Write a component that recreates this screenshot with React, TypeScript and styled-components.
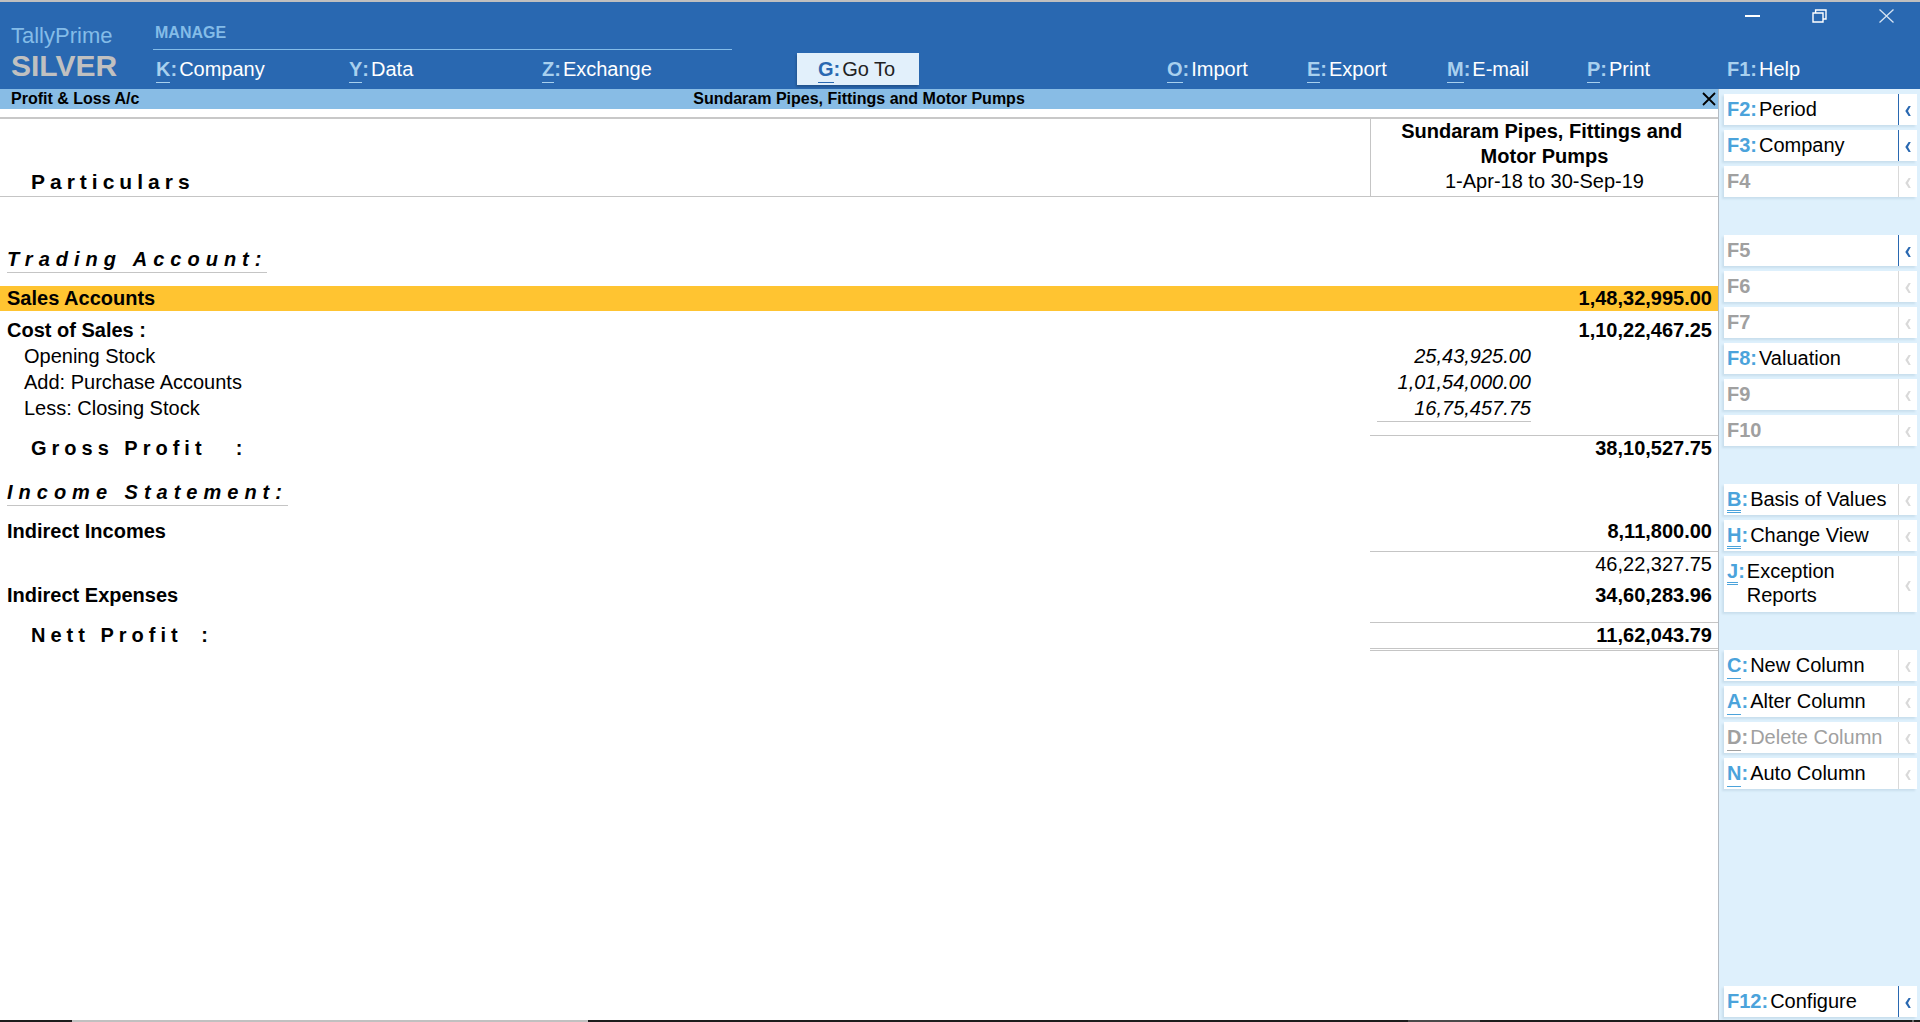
import React from "react";
import styled, { createGlobalStyle, css } from "styled-components";

const color = {
  blue: "#2968b1",
  bar: "#88bce5",
  sky: "#84bce8",
  headKey: "#a8d0ee",
  panel: "#def0fc",
  key: "#4ba3db",
  rule: "#c5c5c5",
  off: "#a0a0a0",
  highlight: "#ffc431",
};

const GlobalStyle = createGlobalStyle`
  *, *::before, *::after { box-sizing: border-box; }
  body {
    margin: 0;
    background: #fff;
    color: #000;
    font: 20px/25px "Liberation Sans", Arial, sans-serif;
  }
  button {
    margin: 0;
    padding: 0;
    border: 0;
    background: none;
    color: inherit;
    font: inherit;
    text-align: left;
    cursor: pointer;
  }
  button:disabled { cursor: default; }
`;

const Page = styled.div`
  display: flex;
  flex-direction: column;
  min-height: 100vh;
`;

/* ---------- top bar ---------- */

const TopBar = styled.header`
  display: flex;
  border-top: 2px solid #bfbfbf;
  background: ${color.blue};
  color: #fff;
`;

const Brand = styled.div`
  width: 153px;
  padding: 21px 0 0 11px;
`;

const Product = styled.div`
  color: ${color.sky};
  font-size: 22px;
  line-height: 26px;
`;

const Edition = styled.div`
  color: #c0c0c0;
  font-size: 30px;
  font-weight: bold;
  line-height: 34px;
`;

const Manage = styled.div`
  width: 579px;
  margin-right: 1px;
  padding-top: 21px;
`;

const ManageTitle = styled.div`
  padding: 0 2px;
  height: 27px;
  border-bottom: 1px solid ${color.sky};
  color: ${color.sky};
  font-size: 16px;
  font-weight: bold;
  line-height: 20px;
`;

const MenuRow = styled.nav<{ $track: number }>`
  display: grid;
  grid-auto-flow: column;
  grid-auto-columns: ${(p) => p.$track}px;
  padding-top: 7px;
`;

const MenuButton = styled.button`
  display: flex;
  padding-left: 3px;
  line-height: 24px;
  white-space: nowrap;
`;

const GoToButton = styled(MenuButton)`
  align-self: flex-start;
  min-width: 122px;
  margin: 51px 0 0 64px;
  padding: 4px 21px 0;
  height: 32px;
  background: #e2f0fb;
  box-shadow: -1px 2px 2px rgba(0, 0, 0, 0.2);
  color: #222;
`;

const KeyText = styled.span<{ $color: string }>`
  display: flex;
  margin-right: 2px;
  color: ${(p) => p.$color};
  font-weight: bold;
`;

const KeyLetter = styled.span<{ $lines: number }>`
  height: 26px;
  ${(p) => p.$lines === 1 && css`border-bottom: 1px solid currentColor;`}
  ${(p) => p.$lines === 2 && css`border-bottom: 3px double currentColor;`}
`;

const RightArea = styled.div`
  display: flex;
  flex-direction: column;
  justify-content: space-between;
  width: 756px;
  height: 87px;
  margin-left: auto;
`;

const WindowControls = styled.div`
  display: flex;
  justify-content: flex-end;
`;

const WindowButton = styled.button`
  display: flex;
  align-items: center;
  justify-content: center;
  width: 67px;
  height: 27px;
`;

const RightMenu = styled.div`
  height: 32px;
  nav { padding-top: 0; }
`;

/* ---------- work area ---------- */

const Work = styled.div`
  display: flex;
  flex: 1;
`;

const Report = styled.main`
  flex: 1;
  min-width: 0;
  border-right: 1px solid #b4bcc4;
`;

const TitleBar = styled.div`
  display: grid;
  grid-template-columns: 1fr auto 1fr;
  height: 20px;
  background: ${color.bar};
  font-size: 16px;
  font-weight: bold;
  line-height: 19px;
`;

const ScreenName = styled.span`
  padding-left: 11px;
`;

const CloseReport = styled.button`
  display: flex;
  align-items: center;
  justify-content: center;
  justify-self: end;
  width: 18px;
  height: 20px;
`;

const Statement = styled.table`
  width: 100%;
  margin-top: 8px;
  border-top: 2px solid #c8c8c8;
  border-collapse: separate;
  border-spacing: 0;
  table-layout: fixed;
`;

const SubCol = styled.col`
  width: 161px;
`;

const AmountCol = styled.col`
  width: 187px;
`;

const HeadCell = styled.th`
  padding: 0 0 2px 31px;
  border-bottom: 1px solid ${color.rule};
  font-size: 21px;
  letter-spacing: 5px;
  text-align: left;
  vertical-align: bottom;
`;

const PeriodCell = styled.th`
  padding: 0 8px 2px;
  border-bottom: 1px solid ${color.rule};
  border-left: 1px solid ${color.rule};
  text-align: center;
`;

const Period = styled.div`
  font-weight: normal;
`;

type Kind = "section" | "head" | "item" | "total" | "carry";

const INDENT: Record<Kind, number> = { section: 7, head: 7, item: 24, total: 31, carry: 7 };

const Row = styled.tr<{ $kind: Kind; $before: number; $after: number; $selected: boolean }>`
  background: ${(p) => (p.$selected ? color.highlight : "transparent")};
  font-weight: ${(p) => (p.$kind === "item" || p.$kind === "carry" ? "normal" : "bold")};
  line-height: ${(p) => (p.$kind === "item" ? 26 : 25)}px;

  th, td {
    padding: ${(p) => p.$before}px 0 ${(p) => p.$after}px;
    font-weight: inherit;
    text-align: right;
    vertical-align: top;
    white-space: nowrap;
  }
  th {
    padding-left: ${(p) => INDENT[p.$kind]}px;
    text-align: left;
  }
  td:last-child { padding-right: 6px; }

  ${(p) =>
    (p.$kind === "total" || p.$kind === "carry") &&
    css`
      line-height: 24px;
      th { border-top: 1px solid transparent; }
      td { border-top: 1px solid ${color.rule}; }
    `}
  ${(p) => p.$kind === "total" && css`th { letter-spacing: 5px; white-space: pre; }`}
`;

const GrandRow = styled(Row)`
  td {
    padding-bottom: 1px;
    border-bottom: 3px double ${color.rule};
  }
`;

const SectionTitle = styled.span`
  display: inline-block;
  height: 26px;
  border-bottom: 1px solid ${color.rule};
  font-style: italic;
  letter-spacing: 6px;
  vertical-align: top;
`;

const Colon = styled.span`
  margin-left: 8px;
`;

const SubAmount = styled.div<{ $last: boolean }>`
  margin-left: 7px;
  border-bottom: ${(p) => (p.$last ? `1px solid ${color.rule}` : "0")};
  font-style: italic;
`;

/* ---------- button panel ---------- */

const Panel = styled.aside`
  display: flex;
  flex-direction: column;
  gap: 38px;
  width: 201px;
  padding: 5px 3px 3px 5px;
  background: ${color.panel};
`;

const Group = styled.div`
  display: flex;
  flex-direction: column;
  gap: 5px;
  &:last-child { margin-top: auto; }
`;

const PanelItem = styled.div<{ $tall: boolean }>`
  display: flex;
  min-height: ${(p) => (p.$tall ? 56 : 31)}px;
  background: #fff;
  box-shadow: -2px 2px 2px #c9dfed;
`;

const PanelButton = styled.button`
  display: flex;
  flex: 1;
  align-items: flex-start;
  padding: 3px 0 2px 3px;
  line-height: 24px;
  &:disabled { color: ${color.off}; }
`;

const MoreButton = styled.button<{ $active: boolean }>`
  display: flex;
  align-items: center;
  justify-content: center;
  width: 19px;
  padding-top: 3px;
  border-left: 1px solid ${(p) => (p.$active ? color.blue : "#d9d9d9")};
  color: ${(p) => (p.$active ? color.blue : "#d9d9d9")};
`;

/* ---------- bottom edge ---------- */

const Edge = styled.footer`
  display: flex;
  height: 2px;
  background: #1c1c1c;
`;

const EdgePart = styled.span<{ $left: number; $width: number; $fill: string }>`
  width: ${(p) => p.$width}px;
  margin-left: ${(p) => p.$left}px;
  background: ${(p) => p.$fill};
`;

interface HotKeyProps {
  k: string;
  tint: string;
  lines?: number;
  colon?: boolean;
}

const HotKey = ({ k, tint, lines = 1, colon = true }: HotKeyProps) => (
  <KeyText $color={tint}>
    <KeyLetter $lines={lines}>{k}</KeyLetter>
    {colon && ":"}
  </KeyText>
);

const Chevron = () => (
  <svg width="6" height="10" viewBox="0 0 6 10" aria-hidden="true">
    <path d="M5.8 0H3.6L0.3 5L3.6 10H5.8L3 5Z" fill="currentColor" />
  </svg>
);

const leftMenu = [["K", "Company"], ["Y", "Data"], ["Z", "Exchange"]];
const rightMenu = [["O", "Import"], ["E", "Export"], ["M", "E-mail"], ["P", "Print"], ["F1", "Help"]];

interface Line {
  kind: Kind;
  name?: string;
  sub?: string;
  lastSub?: boolean;
  amount?: string;
  before?: number;
  after?: number;
  selected?: boolean;
  grand?: boolean;
}

const lines: Line[] = [
  { kind: "section", name: "Trading Account:", before: 50, after: 13 },
  { kind: "head", name: "Sales Accounts", amount: "1,48,32,995.00", selected: true },
  { kind: "head", name: "Cost of Sales :", amount: "1,10,22,467.25", before: 7 },
  { kind: "item", name: "Opening Stock", sub: "25,43,925.00" },
  { kind: "item", name: "Add: Purchase Accounts", sub: "1,01,54,000.00" },
  { kind: "item", name: "Less: Closing Stock", sub: "16,75,457.75", lastSub: true, after: 13 },
  { kind: "total", name: "Gross Profit  ", amount: "38,10,527.75" },
  { kind: "section", name: "Income Statement:", before: 20, after: 13 },
  { kind: "head", name: "Indirect Incomes", amount: "8,11,800.00", after: 7 },
  { kind: "carry", amount: "46,22,327.75" },
  { kind: "head", name: "Indirect Expenses", amount: "34,60,283.96", before: 7, after: 14 },
  { kind: "total", name: "Nett Profit ", amount: "11,62,043.79", grand: true },
];

interface Item {
  k: string;
  label?: string;
  lines?: number;
  active?: boolean;
  off?: boolean;
  tall?: boolean;
}

const groups: Item[][] = [
  [
    { k: "F2", label: "Period", active: true },
    { k: "F3", label: "Company", active: true },
    { k: "F4", off: true },
  ],
  [
    { k: "F5", off: true, active: true },
    { k: "F6", off: true },
    { k: "F7", off: true },
    { k: "F8", label: "Valuation" },
    { k: "F9", off: true },
    { k: "F10", off: true },
  ],
  [
    { k: "B", label: "Basis of Values", lines: 2 },
    { k: "H", label: "Change View", lines: 2 },
    { k: "J", label: "Exception Reports", lines: 2, tall: true },
  ],
  [
    { k: "C", label: "New Column", lines: 1 },
    { k: "A", label: "Alter Column", lines: 1 },
    { k: "D", label: "Delete Column", lines: 1, off: true },
    { k: "N", label: "Auto Column", lines: 1 },
  ],
  [{ k: "F12", label: "Configure", active: true }],
];

const StatementRow = ({ line }: { line: Line }) => {
  const RowTag = line.grand ? GrandRow : Row;
  return (
    <RowTag
      $kind={line.kind}
      $before={line.before ?? 0}
      $after={line.after ?? 0}
      $selected={!!line.selected}
    >
      <th scope="row">
        {line.kind === "section" ? <SectionTitle>{line.name}</SectionTitle> : line.name}
        {line.kind === "total" && <Colon>:</Colon>}
      </th>
      <td>{line.sub && <SubAmount $last={!!line.lastSub}>{line.sub}</SubAmount>}</td>
      <td>{line.amount}</td>
    </RowTag>
  );
};

export default function App() {
  return (
    <Page>
      <GlobalStyle />
      <TopBar>
        <Brand>
          <Product>TallyPrime</Product>
          <Edition>SILVER</Edition>
        </Brand>
        <Manage>
          <ManageTitle>MANAGE</ManageTitle>
          <MenuRow $track={193}>
            {leftMenu.map(([k, label]) => (
              <MenuButton key={k}>
                <HotKey k={k} tint={color.headKey} />
                {label}
              </MenuButton>
            ))}
          </MenuRow>
        </Manage>
        <GoToButton>
          <HotKey k="G" tint={color.blue} />
          Go To
        </GoToButton>
        <RightArea>
          <WindowControls>
            <WindowButton aria-label="Minimize">
              <svg width="16" height="14" viewBox="0 0 16 14">
                <path d="M0 7H15" stroke="#fff" strokeWidth="2" />
              </svg>
            </WindowButton>
            <WindowButton aria-label="Restore">
              <svg width="16" height="14" viewBox="0 0 16 14" fill="none" stroke="#fff" strokeWidth="1.4">
                <path d="M1 4H11V13H1ZM3.6 4V1H14V10H11" />
              </svg>
            </WindowButton>
            <WindowButton aria-label="Close">
              <svg width="16" height="14" viewBox="0 0 16 14">
                <path d="M0.5 0.5L14.5 13.5M14.5 0.5L0.5 13.5" stroke="#d5e3f2" strokeWidth="1.3" />
              </svg>
            </WindowButton>
          </WindowControls>
          <RightMenu>
            <MenuRow $track={140}>
              {rightMenu.map(([k, label]) => (
                <MenuButton key={k}>
                  <HotKey k={k} tint={color.headKey} lines={k.length > 1 ? 0 : 1} />
                  {label}
                </MenuButton>
              ))}
            </MenuRow>
          </RightMenu>
        </RightArea>
      </TopBar>

      <Work>
        <Report>
          <TitleBar>
            <ScreenName>Profit &amp; Loss A/c</ScreenName>
            <span>Sundaram Pipes, Fittings and Motor Pumps</span>
            <CloseReport aria-label="Close report">
              <svg width="14" height="14" viewBox="0 0 14 14">
                <path d="M1 1L13 13M13 1L1 13" stroke="#000" strokeWidth="1.8" />
              </svg>
            </CloseReport>
          </TitleBar>
          <Statement>
            <colgroup>
              <col />
              <SubCol />
              <AmountCol />
            </colgroup>
            <thead>
              <tr>
                <HeadCell scope="col">Particulars</HeadCell>
                <PeriodCell scope="colgroup" colSpan={2}>
                  Sundaram Pipes, Fittings and&nbsp;
                  <br />
                  Motor Pumps
                  <Period>1-Apr-18 to 30-Sep-19</Period>
                </PeriodCell>
              </tr>
            </thead>
            <tbody>
              {lines.map((line, i) => (
                <StatementRow key={i} line={line} />
              ))}
            </tbody>
          </Statement>
        </Report>

        <Panel>
          {groups.map((group, i) => (
            <Group key={i}>
              {group.map((item) => (
                <PanelItem key={item.k} $tall={!!item.tall}>
                  <PanelButton disabled={item.off}>
                    <HotKey
                      k={item.k}
                      tint={item.off ? color.off : color.key}
                      lines={item.lines ?? 0}
                      colon={!!item.label}
                    />
                    {item.label}
                  </PanelButton>
                  <MoreButton $active={!!item.active} disabled={!item.active} aria-label={`${item.k} options`}>
                    <Chevron />
                  </MoreButton>
                </PanelItem>
              ))}
            </Group>
          ))}
        </Panel>
      </Work>

      <Edge>
        <EdgePart $left={0} $width={72} $fill="#1c1c1c" />
        <EdgePart $left={0} $width={516} $fill="#c0c0c0" />
        <EdgePart $left={820} $width={72} $fill="#4a4a4a" />
        <EdgePart $left={432} $width={2} $fill="#6a6a6a" />
      </Edge>
    </Page>
  );
}
